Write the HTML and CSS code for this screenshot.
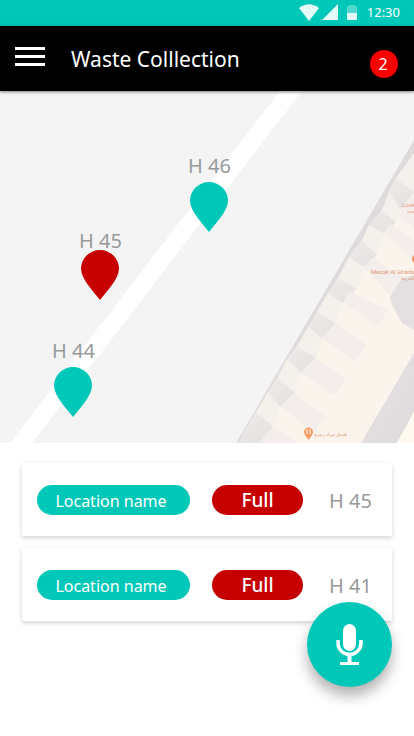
FILE: index.html
```html
<!DOCTYPE html>
<html lang="en">
<head>
<meta charset="utf-8">
<meta name="viewport" content="width=device-width, initial-scale=1">
<title>Waste Colllection</title>
<link rel="stylesheet" href="styles.css">
</head>
<body>
<div class="status">
  <svg class="wifi" width="20" height="17" viewBox="0 0 21 17" preserveAspectRatio="none" aria-hidden="true"><path d="M0 4Q10.500-3.500 21 4L10.500 17Z" fill="currentColor"/></svg>
  <svg class="signal" width="16" height="16" viewBox="0 0 17 17" aria-hidden="true"><path d="M17 0V17H0Z" fill="currentColor"/></svg>
  <svg class="battery" width="10" height="15" viewBox="0 0 10 15" aria-hidden="true"><path d="M0 2Q0 1 1 1H2V0H8V1H9Q10 1 10 2V8H0Z" fill="currentColor" opacity=".35"/><path d="M0 8H10V14Q10 15 9 15H1Q0 15 0 14Z" fill="currentColor"/></svg>
  <time>12:30</time>
</div>
<header class="bar">
  <button class="menu" type="button" aria-label="Menu"><span></span><span></span><span></span></button>
  <h1>Waste Colllection</h1>
  <span class="badge">2</span>
</header>
<main>
  <section class="map" aria-label="Map">
    <svg class="ground" viewBox="0 91 414 352" preserveAspectRatio="xMidYMid slice" aria-hidden="true">
      <defs>
        <linearGradient id="wall" x1="0" y1="0" x2="1" y2="1"><stop offset="0" stop-color="#e6e1e1"/><stop offset="1" stop-color="#dfdadc"/></linearGradient>
        <linearGradient id="fold" x1="0" y1="0" x2="1" y2="1"><stop offset="0" stop-color="#efebe9"/><stop offset="1" stop-color="#e5e0e1"/></linearGradient>
      </defs>
      <path d="M280 91H302L32 443H10Z" fill="#fff"/>
      <path d="M414 140V443H236Z" fill="#dfdadc"/>
      <path d="M414 153L396 178L389 192L382 210L369 225L362 240L349 257L338 278L328 293L317 312L308 327L297 346L287 359L277 378L268 392L256 412L244 432L239 443H414Z" fill="#f4f0ec"/>
      <g fill="url(#fold)">
        <path d="M396 178L414 192L401 210L389 192Z"/>
        <path d="M382 210L396 223L384 233L369 225Z"/>
        <path d="M362 240L377 255L364 267L349 257Z"/>
        <path d="M338 278L357 289L343 303L328 293Z"/>
        <path d="M317 312L336 323L322 338L308 327Z"/>
        <path d="M297 346L316 358L301 373L287 359Z"/>
        <path d="M277 378L295 393L280 407L268 392Z"/>
        <path d="M256 412L273 427L259 443H239L244 432Z"/>
      </g>
      <path d="M414 192L401 210L396 223L384 233L377 255L364 267L357 289L343 303L336 323L322 338L316 358L301 373L295 393L280 407L273 427L259 443H414Z" fill="#fbf4ed"/>
      <g fill="#f3eeec">
        <path d="M414 192L401 210L399 218L414 228Z"/>
        <path d="M384 233L390 224L414 240V262Z"/>
        <path d="M364 267L372 258L403 277L390 295Z"/>
        <path d="M343 303L349 291L388 310L377 326Z"/>
        <path d="M322 338L336 323L367 345L355 362Z"/>
        <path d="M301 373L315 358L346 380L334 396Z"/>
        <path d="M280 407L294 393L325 416L315 432Z"/>
        <path d="M259 443L273 427L298 443Z"/>
      </g>
      <path d="M414 275L402 278L390 297L392 305L402 323L414 330Z" fill="#e4dfe1"/>
      <path d="M414 353V412L397 443H361Z" fill="url(#wall)"/>
      <path d="M414 412V443H397Z" fill="#fdf9ee"/>
      <circle cx="416" cy="259" r="4" fill="#f59660"/>
      <circle cx="308.500" cy="432" r="4.500" fill="#f79a66"/>
      <path d="M305 435L308.500 440L312 435Z" fill="#f79a66"/>
      <path d="M307 429V434M310 429V434" stroke="#fff" fill="none"/>
      <g class="places">
        <text x="402" y="207">Look</text>
        <text x="407" y="213" class="minor">جدة</text>
        <text x="371" y="274">Mezak Al Gharbi</text>
        <text x="401" y="280" class="minor">الغربية</text>
        <text x="314" y="436" class="minor">فندق مراد ريتره</text>
      </g>
    </svg>
    <div class="pin pin-46"><span>H 46</span><svg width="38" height="50" viewBox="0 0 38 50" aria-hidden="true"><path d="M19 50C12 41 0 29 0 18.500A19 18.500 0 0 1 38 18.500C38 29 26 41 19 50Z"/></svg></div>
    <div class="pin pin-45 full"><span>H 45</span><svg width="38" height="50" viewBox="0 0 38 50" aria-hidden="true"><path d="M19 50C12 41 0 29 0 18.500A19 18.500 0 0 1 38 18.500C38 29 26 41 19 50Z"/></svg></div>
    <div class="pin pin-44"><span>H 44</span><svg width="38" height="50" viewBox="0 0 38 50" aria-hidden="true"><path d="M19 50C12 41 0 29 0 18.500A19 18.500 0 0 1 38 18.500C38 29 26 41 19 50Z"/></svg></div>
  </section>
  <ul class="bins">
    <li><span class="pill place">Location name</span><span class="pill state">Full</span><span class="house">H 45</span></li>
    <li><span class="pill place">Location name</span><span class="pill state">Full</span><span class="house">H 41</span></li>
  </ul>
</main>
<button class="mic" type="button" aria-label="Voice command">
  <svg width="27" height="42" viewBox="0 0 27 42" aria-hidden="true"><rect x="7" y="0" width="13" height="27" rx="6.500" fill="#fff"/><path d="M2 16V19A11.500 11.500 0 0 0 25 19V16" fill="none" stroke="#fff" stroke-width="3.500"/><path d="M11.500 31H15.500V38H23V41H4V38H11.500Z" fill="#fff"/></svg>
</button>
</body>
</html>
```
FILE: styles.css
```css
:root {
  --teal: #00c8b8;
  --red: #c60000;
  --grey: #979a9b;
}
* { box-sizing: border-box; }
body {
  margin: 0;
  min-height: 100vh;
  background: #fff;
  color: #fff;
  font-family: "Noto Sans", "Open Sans", sans-serif;
}
button { border: 0; padding: 0; color: inherit; cursor: pointer; }
.status {
  display: flex;
  justify-content: flex-end;
  align-items: center;
  height: 26px;
  padding: 0 14px 2px;
  background: var(--teal);
  font-size: 13px;
  line-height: 20px;
}
.status svg { color: #e4faf7; }
.wifi { margin-right: 3px; }
.signal { margin-right: 9px; }
.battery { margin-right: 10px; }
.bar {
  position: relative;
  z-index: 1;
  display: flex;
  align-items: center;
  height: 65px;
  padding: 0 16px 0 15px;
  background: #000;
  box-shadow: 0 1px 3px rgba(0, 0, 0, .5);
}
.menu {
  display: grid;
  gap: 5px;
  width: 30px;
  margin: 0 26px 4px 0;
  background: none;
}
.menu span { height: 3px; background: #fff; }
h1 {
  flex: 1;
  margin: 0;
  font-size: 21px;
  font-weight: 400;
  line-height: 28px;
}
.badge {
  width: 28px;
  margin-top: 10px;
  padding-right: 2px;
  border-radius: 50%;
  background: #f00;
  font-size: 16px;
  line-height: 28px;
  text-align: center;
}
.map {
  position: relative;
  height: 352px;
  overflow: hidden;
  background: #f4f4f4;
}
.ground { display: block; width: 100%; height: 100%; }
.places {
  fill: #e49a78;
  font-family: Roboto, "DejaVu Sans", sans-serif;
  font-size: 6px;
}
.minor { font-size: 5px; }
.pin {
  position: absolute;
  display: grid;
  justify-items: center;
  color: var(--grey);
  font-size: 20px;
  line-height: 24px;
}
.pin span { margin-bottom: 4px; }
.pin svg { fill: var(--teal); }
.full span { margin-bottom: -3px; }
.full svg { fill: var(--red); }
.pin-46 { left: 188px; top: 63px; }
.pin-45 { left: 79px; top: 138px; }
.pin-44 { left: 52px; top: 248px; }
.bins {
  display: grid;
  gap: 12px;
  margin: 0;
  padding: 20px 22px;
  list-style: none;
}
.bins li {
  display: flex;
  align-items: center;
  height: 73px;
  padding: 0 20px 0 15px;
  border-radius: 2px;
  background: #fff;
  box-shadow: 0 2px 5px rgba(0, 0, 0, .18);
}
.pill {
  height: 30px;
  border-radius: 15px;
  line-height: 30px;
  text-align: center;
}
.place {
  width: 153px;
  margin-right: 22px;
  padding-right: 5px;
  background: var(--teal);
  font-size: 16px;
  line-height: 32px;
}
.state {
  width: 91px;
  background: var(--red);
  font-size: 19px;
  font-weight: 500;
}
.house {
  margin-left: auto;
  padding-top: 2px;
  color: var(--grey);
  font-size: 20px;
  line-height: 24px;
}
.mic {
  position: fixed;
  right: 22px;
  bottom: 49px;
  display: grid;
  place-items: center;
  width: 85px;
  height: 85px;
  border-radius: 50%;
  background: var(--teal);
  box-shadow: 0 9px 14px rgba(0, 0, 0, .3);
}
```
